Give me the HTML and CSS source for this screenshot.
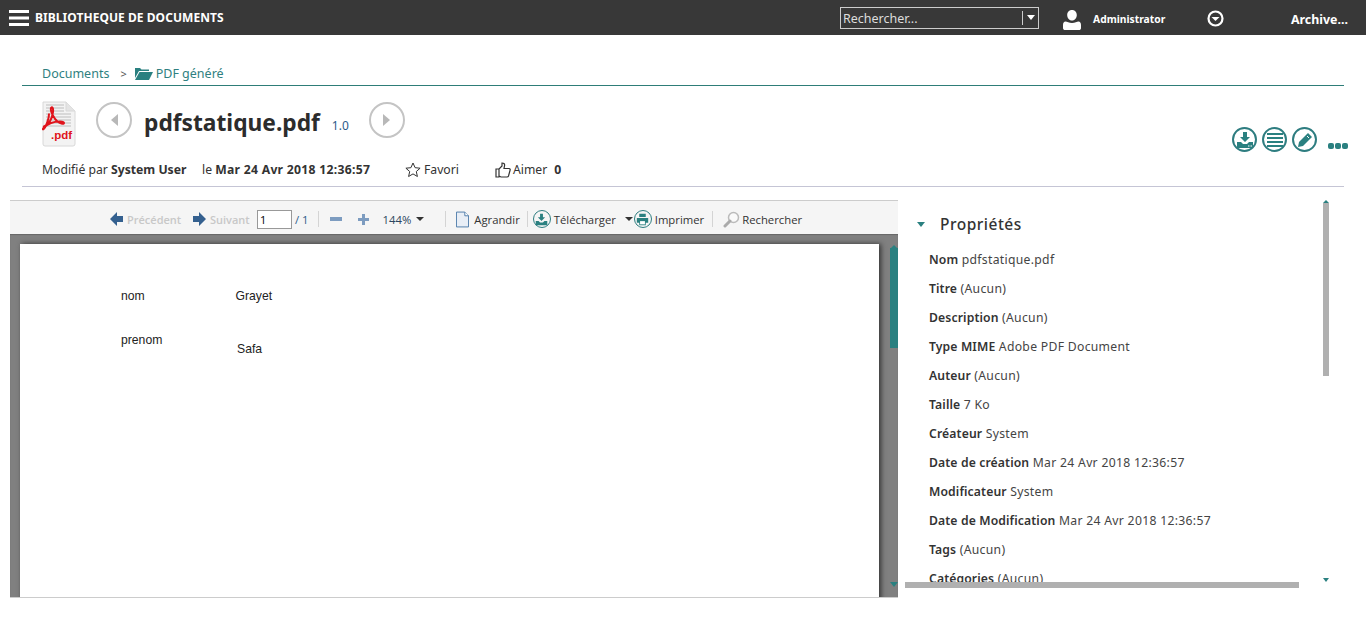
FILE: index.html
```html
<!DOCTYPE html>
<html lang="fr">
<head>
  <meta charset="UTF-8">
  <title>Bibliothèque de documents</title>
  <link rel="stylesheet" href="styles.css">
</head>
<body>

  <header class="topbar">
    <svg class="burger" width="20" height="16" viewBox="0 0 20 16"><path d="M0 0h20v3H0zM0 6.500h20v3H0zM0 13h20v3H0z" fill="#fff"/></svg>
    <span class="app-title">BIBLIOTHEQUE DE DOCUMENTS</span>
    <div class="search">
      <span class="search-text">Rechercher...</span>
      <span class="search-arrow"></span>
    </div>
    <svg class="user-icon" width="18" height="20" viewBox="0 0 18 20"><path d="M9 0c3 0 4.800 2.200 4.800 5S12 10.500 9 10.500 4.200 7.800 4.200 5 6 0 9 0zM2.500 11.500C4 11.500 6 13 9 13s5-1.500 6.500-1.500c1.500 0 2.500 1.500 2.500 3.500v3c0 1.500-1 2-2 2H2c-1 0-2-.5-2-2v-3c0-2 1-3.500 2.500-3.500z" fill="#fff"/></svg>
    <span class="user-name">Administrator</span>
    <svg class="user-menu" width="17" height="17" viewBox="0 0 17 17"><circle cx="8.500" cy="8.500" r="7" fill="none" stroke="#fff" stroke-width="2.200"/><path d="M4.500 7h8l-4 4z" fill="#fff"/></svg>
    <span class="archive">Archive...</span>
  </header>

  <nav class="crumbs">
    <span>Documents</span>
    <span class="crumb-sep">&gt;</span>
    <svg width="18" height="13" viewBox="0 0 18 13"><path d="M0 1h5l1.500 1.500H14V4H4L0 11zM4.500 5H18l-4 8H0z" fill="#2a8080"/></svg>
    <span>PDF généré</span>
  </nav>

  <section class="doc-head">
    <div class="title-row">
      <svg class="pdf-icon" width="34" height="46" viewBox="0 0 34 46">
        <path d="M1 1h23l9 9v33q0 2-2 2H3q-2 0-2-2z" fill="#f3f3f3" stroke="#d8d8d8"/>
        <path d="M24 1v9h9" fill="#e4e4e4" stroke="#d8d8d8"/>
        <path d="M4 4h18M4 7h18M4 10h18M4 13h25M4 16h25M4 19h25M4 22h25M4 25h25" stroke="#cfcfcf" stroke-width="1.500"/>
        <path d="M1 26c6-2 9-8 10-15 .5-4-1-6-2-4-1 3 3 11 7 14 3 2 6 2.500 6 1s-2-1.500-4-1.500c-6 0-12 2-16 6-2 2-1 3 1 0 2-4 4-9 4-14" fill="none" stroke="#e0141c" stroke-width="2"/>
        <text class="pdf-label" x="9" y="38">.pdf</text>
      </svg>
      <button class="round-nav"><span class="tri-left"></span></button>
      <h1 class="doc-title">pdfstatique.pdf</h1>
      <span class="doc-version">1.0</span>
      <button class="round-nav"><span class="tri-right"></span></button>
      <div class="doc-actions">
        <span class="action">
          <svg width="18" height="18" viewBox="0 0 18 18"><path d="M7 1h4v5h3l-5 5-5-5h3zM1 11h4l2 2h4l2-2h4v6H1z" fill="#2a8080"/><path d="M12 15h1.500M14.500 15H16" stroke="#fff"/></svg>
        </span>
        <span class="action">
          <svg width="18" height="16" viewBox="0 0 18 16"><path d="M1 1h16v2H1zM1 5h16v2H1zM1 9h16v2H1zM1 13h16v2H1z" fill="#2a8080"/></svg>
        </span>
        <span class="action">
          <svg width="16" height="16" viewBox="0 0 16 16"><path d="M11 1l4 4-9 9-5 1 1-5z" fill="#2a8080"/><path d="M10 4l2 2" stroke="#fff"/></svg>
        </span>
        <span class="more"><i></i><i></i><i></i></span>
      </div>
    </div>
    <div class="meta-row">
      <span class="meta-by">Modifié par <b>System User</b></span>
      <span class="meta-date">le <b>Mar 24 Avr 2018 12:36:57</b></span>
      <span class="meta-fav">
        <svg width="16" height="16" viewBox="0 0 16 16"><path d="M8 1l2.100 4.700 5 .5-3.800 3.300 1.100 5L8 11.900l-4.400 2.600 1.100-5L.9 6.200l5-.5z" fill="none" stroke="#333"/></svg>
        Favori
      </span>
      <span class="meta-like">
        <svg width="16" height="16" viewBox="0 0 16 16"><path d="M1 7h3v8H1zM4 7l3-3V1c2 0 3 1 2.500 3L9 6.500h5c1 0 1.500 1 1 2l-1.500 5.500c-.3 1-1 1-1.500 1H6l-2-1" fill="none" stroke="#333" stroke-width="1.200"/></svg>
        Aimer <b>0</b>
      </span>
    </div>
  </section>

  <div class="split">
    <section class="viewer">
      <div class="toolbar">
        <span class="tool tool-off tool-prev"><svg width="13" height="14" viewBox="0 0 13 14"><path d="M0 7l7-7v4h6v6H7v4z" fill="#34608f"/></svg>Précédent</span>
        <span class="tool tool-off tool-next"><svg width="13" height="14" viewBox="0 0 13 14"><path d="M13 7L6 0v4H0v6h6v4z" fill="#34608f"/></svg>Suivant</span>
        <input class="page-input" value="1">
        <span class="page-total">/ 1</span>
        <span class="tool-sep sep-a"></span>
        <svg class="zoom-out" width="12" height="4" viewBox="0 0 12 4"><path d="M0 0h12v4H0z" fill="#7d9cc0"/></svg>
        <svg class="zoom-in" width="11" height="11" viewBox="0 0 11 11"><path d="M4 0h3v4h4v3H7v4H4V7H0V4h4z" fill="#7d9cc0"/></svg>
        <span class="zoom-val">144%</span>
        <span class="tri-down zoom-tri"></span>
        <span class="tool-sep sep-b"></span>
        <svg class="fit-icon" width="13" height="17" viewBox="0 0 14 17"><path d="M.5.500h9l4 4v12H.500z" fill="#e8eef6" stroke="#4a78a8"/><path d="M9.500.500v4h4" fill="#fff" stroke="#4a78a8"/></svg>
        <span class="tool">Agrandir</span>
        <span class="tool-sep sep-c"></span>
        <span class="ring"><svg width="13" height="13" viewBox="0 0 18 18"><path d="M7 1h4v5h3l-5 5-5-5h3zM1 11h4l2 2h4l2-2h4v6H1z" fill="#2a8080"/></svg></span>
        <span class="tool tool-dl">Télécharger</span>
        <span class="tri-down dl-tri"></span>
        <span class="ring"><svg width="13" height="13" viewBox="0 0 16 16"><path d="M4 1h8v4H4zM1 6h14v6h-3v3H4v-3H1z" fill="#2a8080"/><path d="M5 10h6v4H5z" fill="#fff"/></svg></span>
        <span class="tool tool-print">Imprimer</span>
        <span class="tool-sep sep-d"></span>
        <svg class="find-icon" width="17" height="17" viewBox="0 0 17 17"><circle cx="10.500" cy="6.500" r="5" fill="#fafafa" stroke="#bbb" stroke-width="1.500"/><path d="M7 10l-5 5" stroke="#aaa" stroke-width="3" stroke-linecap="round"/></svg>
        <span class="tool">Rechercher</span>
      </div>
      <div class="pages">
        <div class="page">
          <span class="pdf-text t-nom">nom</span>
          <span class="pdf-text t-grayet">Grayet</span>
          <span class="pdf-text t-prenom">prenom</span>
          <span class="pdf-text t-safa">Safa</span>
        </div>
        <div class="pages-bar"></div>
        <span class="bar-up"></span>
        <span class="bar-down"></span>
      </div>
    </section>

    <aside class="props">
      <h2 class="props-title"><span class="tri-teal"></span>Propriétés</h2>
      <ul class="props-list">
        <li><b>Nom</b> pdfstatique.pdf</li>
        <li><b>Titre</b> (Aucun)</li>
        <li><b>Description</b> (Aucun)</li>
        <li><b>Type MIME</b> Adobe PDF Document</li>
        <li><b>Auteur</b> (Aucun)</li>
        <li><b>Taille</b> 7 Ko</li>
        <li><b>Créateur</b> System</li>
        <li><b>Date de création</b> Mar 24 Avr 2018 12:36:57</li>
        <li><b>Modificateur</b> System</li>
        <li><b>Date de Modification</b> Mar 24 Avr 2018 12:36:57</li>
        <li><b>Tags</b> (Aucun)</li>
        <li><b>Catégories</b> (Aucun)</li>
      </ul>
      <div class="vbar"></div>
      <div class="hbar"></div>
      <span class="props-up"></span>
      <span class="props-down"></span>
    </aside>
  </div>

</body>
</html>
```

FILE: styles.css
```css
html, body {
  margin: 0;
  padding: 0;
  height: 618px;
  overflow: hidden;
  background: #fff;
}
body {
  font-family: "Noto Sans", "Open Sans", sans-serif;
  font-size: 12px;
  color: #333;
}

/* top bar */
.topbar {
  display: flex;
  align-items: center;
  height: 35px;
  background: #383838;
  color: #fff;
}
.burger { margin-left: 9px; }
.app-title {
  margin-left: 6px;
  width: 805px;
  font-size: 12px;
  font-weight: 700;
  letter-spacing: 0.05px;
}
.search {
  display: flex;
  align-items: center;
  justify-content: space-between;
  box-sizing: border-box;
  width: 199px;
  height: 22px;
  border: 1px solid #ccc;
  margin-top: 1px;
}
.search-text {
  padding-left: 2px;
  font-size: 12.500px;
  color: #ddd;
}
.search-arrow {
  width: 15px;
  height: 14px;
  border-left: 1px solid #ccc;
  position: relative;
}
.search-arrow::after {
  content: "";
  position: absolute;
  left: 4px;
  top: 4px;
  border: 4px solid transparent;
  border-top: 5px solid #fff;
  border-bottom: 0;
}
.user-icon { margin: 4px 0 0 24px; }
.user-name {
  margin: 2px 0 0 12px;
  width: 114px;
  font-size: 10.300px;
  font-weight: 700;
}
.user-menu { margin-top: 1px; }
.archive {
  margin: 3px 0 0 67px;
  font-size: 12.400px;
  font-weight: 700;
}

/* breadcrumb */
.crumbs {
  display: flex;
  align-items: center;
  height: 51px;
  box-sizing: border-box;
  margin: 0 22px;
  padding: 27px 0 0 20px;
  border-bottom: 1px solid #2e7d78;
  color: #2f7f80;
  font-size: 12.500px;
}
.crumb-sep { margin: 0 8px 0 11px; color: #555; font-size: 11px; }
.crumbs svg { margin-right: 3px; }

/* document head */
.doc-head {
  margin: 0 22px;
  height: 101px;
  box-sizing: border-box;
  border-bottom: 1px solid #c5c5d5;
  padding-left: 20px;
}
.title-row {
  display: flex;
  align-items: center;
  box-sizing: border-box;
  height: 67px;
  padding-top: 6px;
  position: relative;
}
.pdf-icon { margin: 3px 0 0 0; }
.pdf-label { font: 700 11.500px "Liberation Sans", sans-serif; fill: #e0141c; }
.round-nav {
  box-sizing: border-box;
  display: flex;
  align-items: center;
  justify-content: center;
  width: 36px;
  height: 36px;
  margin: -5px 0 0 20px;
  padding: 0;
  border: 2px solid #c4c4c4;
  border-radius: 50%;
  background: #fff;
}
.tri-left {
  border: 6px solid transparent;
  border-right: 7px solid #b8b8b8;
  border-left: 0;
}
.tri-right {
  border: 6px solid transparent;
  border-left: 7px solid #b8b8b8;
  border-right: 0;
}
.doc-title {
  margin: 0 0 0 12px;
  font-size: 22.750px;
  font-weight: 700;
  color: #2c2c2c;
}
.doc-version {
  margin: 6px 0 0 12px;
  width: 17px;
  font-size: 12px;
  color: #2d5b8a;
}
.doc-actions {
  display: flex;
  align-items: center;
  position: absolute;
  right: -4px;
  top: 41px;
}
.action {
  box-sizing: border-box;
  display: flex;
  align-items: center;
  justify-content: center;
  width: 25px;
  height: 25px;
  margin-right: 5px;
  border: 2px solid #2e7d80;
  border-radius: 50%;
}
.more {
  display: flex;
  gap: 1px;
  margin: 13px 0 0 6px;
}
.more i {
  width: 6px;
  height: 6px;
  border-radius: 2px;
  background: #2a8080;
}
.meta-row {
  display: flex;
  align-items: center;
  height: 33px;
  font-size: 12.200px;
  color: #333;
}
.meta-by { width: 160px; }
.meta-date { width: 203px; }
.meta-date b { letter-spacing: 0.28px; }
.meta-fav { width: 90px; display: flex; align-items: center; gap: 3px; }
.meta-like { display: flex; align-items: center; gap: 2px; }
.meta-like b { margin-left: 5px; }

/* viewer + properties */
.split {
  display: flex;
  margin: 13px 0 0 10px;
  height: 398px;
}
.viewer {
  display: flex;
  flex-direction: column;
  width: 888px;
  border-bottom: 1px solid #ccc;
  box-sizing: border-box;
}
.toolbar {
  display: flex;
  align-items: center;
  height: 34px;
  flex: none;
  box-sizing: border-box;
  border-top: 1px solid #ccc;
  padding: 3px 0 0 100px;
  background: #f5f5f5;
  font-family: "Open Sans", sans-serif;
  font-size: 11.300px;
  color: #333;
}
.tool { display: flex; align-items: center; white-space: nowrap; }
.tool-off { color: #c8c8c8; font-size: 11px; font-weight: 600; }
.tool-off svg { margin-right: 4px; }
.tool-prev { width: 83px; }
.tool-next { width: 64px; }
.page-input {
  box-sizing: border-box;
  width: 35px;
  height: 19px;
  padding: 0 2px;
  border: 1px solid #999;
  background: #fff;
  font: 11px "Open Sans", sans-serif;
}
.page-total { margin-left: 3px; color: #2d5b8a; }
.tool-sep { width: 1px; height: 16px; background: #d4d4d4; }
.sep-a { margin-left: 9px; }
.zoom-out { margin-left: 11px; }
.zoom-in { margin-left: 16px; }
.zoom-val { margin-left: 14px; color: #2d4560; }
.tri-down {
  width: 0;
  border: 4px solid transparent;
  border-top: 4px solid #333;
  border-bottom: 0;
}
.zoom-tri { margin-left: 5px; }
.sep-b { margin-left: 21px; }
.fit-icon { margin: 0 5px 0 10px; }
.sep-c { margin: 0 5px 0 7px; }
.ring {
  box-sizing: border-box;
  display: flex;
  align-items: center;
  justify-content: center;
  width: 18px;
  height: 18px;
  border: 1.500px solid #2e7d80;
  border-radius: 50%;
}
.tool-dl { margin-left: 3px; width: 71px; }
.dl-tri { margin-right: 1px; }
.tool-print { margin-left: 3px; }
.sep-d { margin: 0 10px 0 8px; }
.find-icon { margin-right: 2px; }

.pages {
  position: relative;
  flex: 1;
  background: #808080;
  box-shadow: inset 0 1px 1px #666;
  padding: 10px 0 0 10px;
  overflow: hidden;
}
.page {
  position: relative;
  width: 859px;
  height: 400px;
  background: #fff;
  box-shadow: 2px 0 5px #333;
  font-family: "Liberation Sans", sans-serif;
}
.pdf-text { position: absolute; font-size: 12.200px; color: #222; }
.t-nom { left: 101px; top: 45px; }
.t-grayet { left: 215.500px; top: 45px; }
.t-prenom { left: 101px; top: 89px; }
.t-safa { left: 217px; top: 98px; }
.pages-bar {
  position: absolute;
  right: 0;
  top: 14px;
  width: 8px;
  height: 100px;
  background: #2a8080;
}
.bar-up {
  position: absolute;
  right: 1px;
  top: 11px;
  border: 3px solid transparent;
  border-bottom: 3px solid #2a8080;
  border-top: 0;
}
.bar-down {
  position: absolute;
  right: 0;
  bottom: 10px;
  border: 4px solid transparent;
  border-top: 5px solid #2a8080;
  border-bottom: 0;
}

.props {
  position: relative;
  width: 432px;
  height: 388px;
  padding-left: 19px;
  box-sizing: border-box;
  overflow: hidden;
}
.props-title {
  display: flex;
  align-items: center;
  margin: 14px 0 0 0;
  height: 20px;
  font-size: 15.500px;
  font-weight: 500;
  letter-spacing: 0.5px;
  color: #333;
}
.tri-teal {
  margin-right: 15px;
  border: 4px solid transparent;
  border-top: 5px solid #2a8080;
  border-bottom: 0;
}
.props-list {
  list-style: none;
  margin: 11px 0 0 12px;
  padding: 0;
}
.props-list li {
  height: 29px;
  line-height: 29px;
  font-size: 12.200px;
  letter-spacing: 0.3px;
  color: #444;
  white-space: nowrap;
}
.props-list b { color: #333; font-weight: 600; letter-spacing: 0.12px; }
.vbar {
  position: absolute;
  left: 425px;
  top: 3px;
  width: 6px;
  height: 173px;
  background: #b0b0b0;
}
.hbar {
  position: absolute;
  left: 7px;
  top: 382px;
  width: 394px;
  height: 6px;
  background: #b0b0b0;
}
.props-up {
  position: absolute;
  left: 425px;
  top: 0;
  border: 3px solid transparent;
  border-bottom: 3px solid #2a8080;
  border-top: 0;
}
.props-down {
  position: absolute;
  left: 425px;
  top: 378px;
  border: 3px solid transparent;
  border-top: 4px solid #2a8080;
  border-bottom: 0;
}
```
